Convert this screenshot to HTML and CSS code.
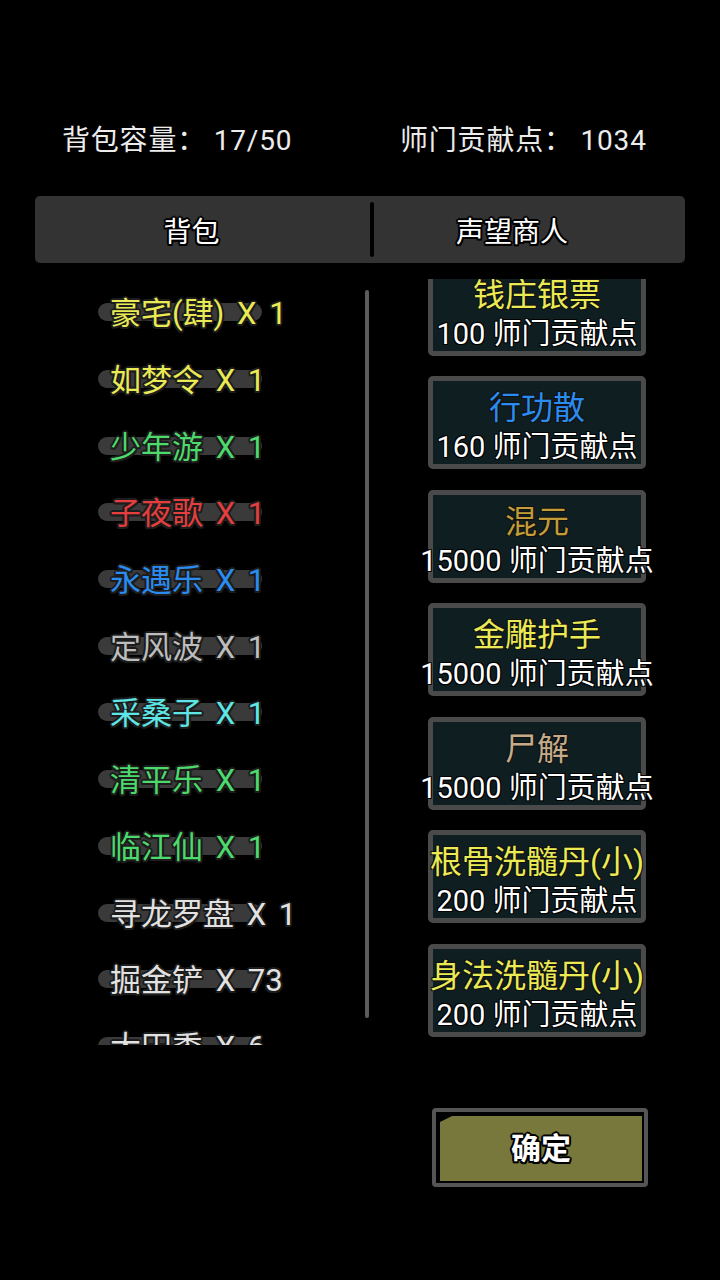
FILE: index.html
```html
<!DOCTYPE html>
<html lang="zh">
<head>
<meta charset="utf-8">
<link rel="stylesheet" href="styles.css">
</head>
<body>
<div class="screen">
  <div class="stats">
    <span class="stat">背包容量： 17/50</span>
    <span class="stat">师门贡献点： 1034</span>
  </div>

  <div class="tabs">
    <div class="tab tab-left">背包</div>
    <div class="tab-divider"></div>
    <div class="tab tab-right">声望商人</div>
  </div>

  <div class="main">
    <div class="bag">
      <div class="item c-yellow"><span>豪宅(肆) X 1</span></div>
      <div class="item c-yellow"><span>如梦令 X 1</span></div>
      <div class="item c-green"><span>少年游 X 1</span></div>
      <div class="item c-red"><span>子夜歌 X 1</span></div>
      <div class="item c-blue"><span>永遇乐 X 1</span></div>
      <div class="item c-gray"><span>定风波 X 1</span></div>
      <div class="item c-cyan"><span>采桑子 X 1</span></div>
      <div class="item c-green"><span>清平乐 X 1</span></div>
      <div class="item c-green"><span>临江仙 X 1</span></div>
      <div class="item c-white"><span>寻龙罗盘 X 1</span></div>
      <div class="item c-white"><span>掘金铲 X 73</span></div>
      <div class="item c-white"><span>大田黍 X 6</span></div>
    </div>
    <div class="scrollbar"></div>
    <div class="shop">
      <div class="shop-list">
        <div class="card"><div class="card-title c-yellow">钱庄银票</div><div class="card-price">100 师门贡献点</div></div>
        <div class="card"><div class="card-title c-blue">行功散</div><div class="card-price">160 师门贡献点</div></div>
        <div class="card"><div class="card-title c-ochre">混元</div><div class="card-price">15000 师门贡献点</div></div>
        <div class="card"><div class="card-title c-yellow">金雕护手</div><div class="card-price">15000 师门贡献点</div></div>
        <div class="card"><div class="card-title c-tan">尸解</div><div class="card-price">15000 师门贡献点</div></div>
        <div class="card"><div class="card-title c-yellow">根骨洗髓丹(小)</div><div class="card-price">200 师门贡献点</div></div>
        <div class="card"><div class="card-title c-yellow">身法洗髓丹(小)</div><div class="card-price">200 师门贡献点</div></div>
      </div>
    </div>
  </div>

  <div class="footer">
    <div class="confirm">
      <div class="confirm-fill">确定</div>
    </div>
  </div>
</div>
</body>
</html>
```

FILE: styles.css
```css
html, body {
  margin: 0;
  padding: 0;
  background: #000;
}

body {
  font-family: Roboto, "Noto Sans CJK SC", sans-serif;
  color: #eaeaea;
}

.screen {
  width: 720px;
  height: 1280px;
  overflow: hidden;
  background: #000;
}

/* top stats */
.stats {
  display: grid;
  grid-template-columns: 338px auto;
  padding: 121px 0 0 62px;
  font-size: 28px;
  line-height: 40px;
  letter-spacing: 0.8px;
  color: #ececec;
}

.stat {
  white-space: pre;
}

/* tabs */
.tabs {
  margin: 35px 35px 0 35px;
  height: 67px;
  background: #333333;
  border-radius: 5px;
  display: grid;
  grid-template-columns: 335px 4px 1fr;
  align-items: center;
}

.tab {
  font-size: 28px;
  line-height: 40px;
  padding-top: 7px;
  color: #fff;
  text-align: center;
  text-shadow:
    2px 0 0 #000, -2px 0 0 #000, 0 2px 0 #000, 0 -2px 0 #000,
    1.5px 1.5px 0 #000, -1.5px -1.5px 0 #000, 1.5px -1.5px 0 #000, -1.5px 1.5px 0 #000;
}

.tab-left {
  padding-right: 22px;
}

.tab-right {
  padding-right: 35px;
}

.tab-divider {
  height: 55px;
  background: #000;
  border-radius: 2px;
}

/* main area */
.main {
  margin-top: 16px;
  height: 766px;
  display: flex;
}

.bag {
  width: 365px;
  height: 766px;
  overflow: hidden;
  flex: none;
}

.item {
  position: relative;
  height: 66.7px;
  display: flex;
  align-items: center;
  padding-left: 110px;
  padding-bottom: 3px;
  box-sizing: border-box;
  font-size: 31px;
  word-spacing: 5px;
  white-space: pre;
  text-shadow:
    1.5px 1.5px 0 #1c1c1c, -1.5px -1.5px 0 #1c1c1c, 1.5px -1.5px 0 #1c1c1c, -1.5px 1.5px 0 #1c1c1c,
    2px 0 0 #1c1c1c, -2px 0 0 #1c1c1c, 0 2px 0 #1c1c1c, 0 -2px 0 #1c1c1c;
}

.item::before {
  content: "";
  position: absolute;
  left: 98px;
  width: 164px;
  top: calc(50% - 9px);
  height: 18px;
  border-radius: 9px;
  background: #3a3a3a;
}

.item span {
  position: relative;
}

.scrollbar {
  flex: none;
  width: 4px;
  margin: 11px 0 27px 0;
  background: #5c5c5c;
  border-radius: 2px;
}

.shop {
  flex: none;
  width: 351px;
  height: 766px;
  overflow: hidden;
}

.shop-list {
  margin-top: -16.5px;
  padding-left: 59px;
  display: flex;
  flex-direction: column;
  gap: 20.5px;
}

.card {
  width: 208px;
  border: 5px solid #4a4a4a;
  border-radius: 5px;
  background: #0f1e21;
  padding-top: 3px;
  box-sizing: content-box;
  height: 80px;
}

.card-title,
.card-price {
  display: flex;
  justify-content: center;
  white-space: pre;
}

.card-title {
  font-size: 32px;
  line-height: 36px;
  margin-top: 6px;
  text-shadow:
    1px 1px 0 #111, -1px -1px 0 #111, 1px -1px 0 #111, -1px 1px 0 #111;
}

.card-price {
  font-size: 29px;
  line-height: 36px;
  margin-top: 3px;
  color: #fff;
  text-shadow:
    1px 1px 0 #000, -1px -1px 0 #000, 1px -1px 0 #000, -1px 1px 0 #000;
}

/* colours */
.c-yellow { color: #eaea55; }
.c-green { color: #4cda6c; }
.c-red { color: #e43e3e; }
.c-blue { color: #2a8cf0; }
.c-gray { color: #bdbdbd; }
.c-cyan { color: #5ee6e6; }
.c-white { color: #e2e2e2; }
.c-ochre { color: #c29c36; }
.c-tan { color: #c4ab8a; }

/* footer */
.footer {
  display: flex;
  justify-content: flex-end;
  padding-right: 72px;
  margin-top: 63px;
}

.confirm {
  border: 4px solid #555;
  border-radius: 4px;
  background: #000;
  padding: 4px 2px 2px 4px;
  box-sizing: border-box;
  width: 216px;
  height: 79px;
}

.confirm-fill {
  height: 100%;
  box-sizing: border-box;
  padding-bottom: 6px;
  background: #78783c;
  clip-path: polygon(12px 0, 100% 0, 100% 100%, 0 100%, 0 6px);
  display: flex;
  align-items: center;
  justify-content: center;
  font-size: 30px;
  font-weight: bold;
  color: #fff;
  text-shadow:
    2px 0 0 #000, -2px 0 0 #000, 0 2px 0 #000, 0 -2px 0 #000,
    1.5px 1.5px 0 #000, -1.5px -1.5px 0 #000, 1.5px -1.5px 0 #000, -1.5px 1.5px 0 #000;
}
```
